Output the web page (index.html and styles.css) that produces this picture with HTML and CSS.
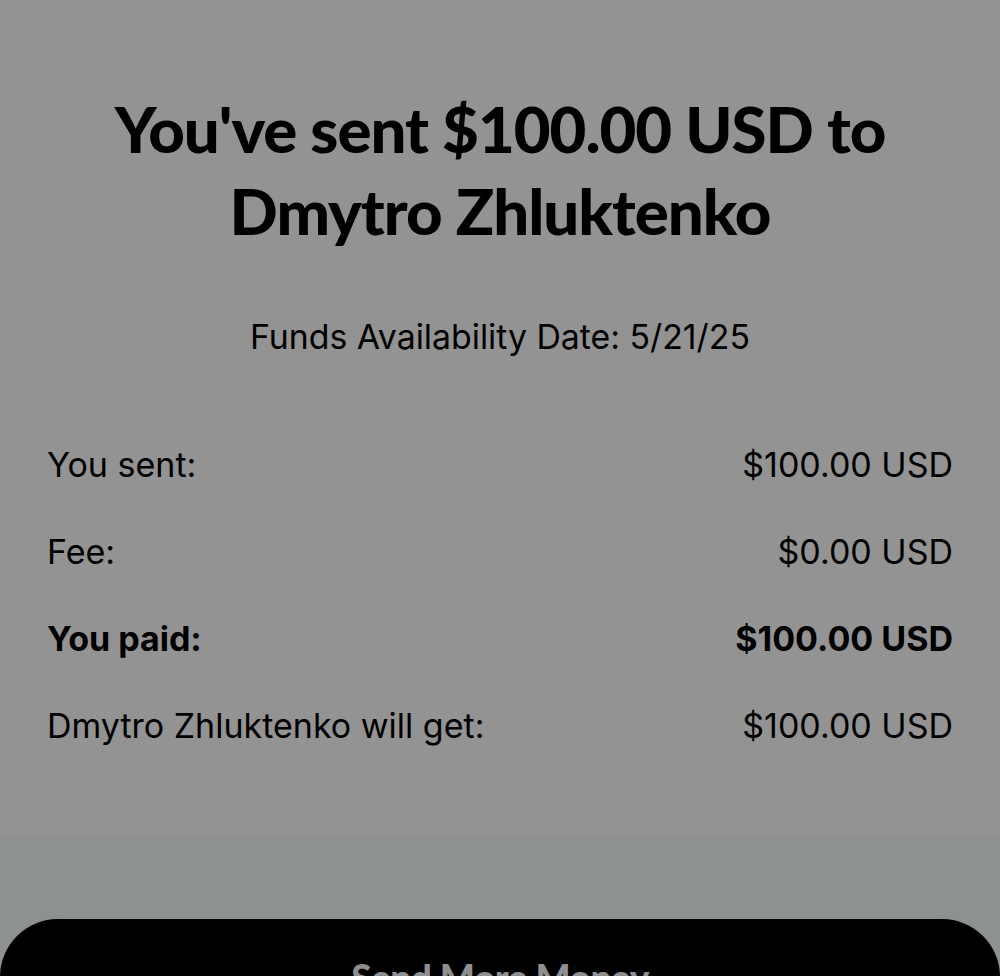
FILE: index.html
```html
<!DOCTYPE html>
<html lang="en">
<head>
    <meta charset="UTF-8">
    <meta name="viewport" content="width=device-width, initial-scale=1.0">
    <title>Payment Sent</title>
    <link rel="stylesheet" href="styles.css">
</head>
<body>
    <div class="summary">
        <h1 class="title">You've sent $100.00 USD to Dmytro Zhluktenko</h1>
        <p class="date">Funds Availability Date: 5/21/25</p>

        <!-- Payment breakdown -->
        <div class="rows">
            <div class="row">
                <span>You sent:</span>
                <span>$100.00 USD</span>
            </div>
            <div class="row">
                <span>Fee:</span>
                <span>$0.00 USD</span>
            </div>
            <div class="row row-total">
                <span>You paid:</span>
                <span>$100.00 USD</span>
            </div>
            <div class="row">
                <span>Dmytro Zhluktenko will get:</span>
                <span>$100.00 USD</span>
            </div>
        </div>
    </div>

    <div class="actions">
        <button class="send-btn">Send More Money</button>
    </div>
</body>
</html>
```

FILE: styles.css
```css
/* General Styles */
body {
    font-family: Inter, "Liberation Sans", sans-serif;
    background-color: #939393;
    color: #000;
    margin: 0;
    padding: 0;
    height: 976px;
    overflow: hidden;
}

.summary {
    padding: 88px 47px 91px;
}

.title {
    font-family: Lato, "Liberation Sans", sans-serif;
    font-weight: 900;
    font-size: 63.5px;
    line-height: 82px;
    letter-spacing: -1px;
    text-align: center;
    margin: 0 60px;
}

.date {
    font-size: 33.8px;
    text-align: center;
    margin: 64px 0 87px;
}

.rows {
    display: flex;
    flex-direction: column;
    gap: 46px;
}

.row {
    display: flex;
    justify-content: space-between;
    font-size: 34px;
    line-height: 41px;
}

.row-total {
    font-weight: 700;
}

.actions {
    background: #8d9191;
    padding-top: 82px;
    height: 200px;
}

.send-btn {
    display: block;
    width: 100%;
    height: 116px;
    background: #000;
    color: #8f8f8f;
    border: none;
    border-radius: 58px;
    font-family: Lato, "Liberation Sans", sans-serif;
    font-weight: 900;
    font-size: 37px;
    letter-spacing: -0.5px;
    padding: 0;
    text-align: center;
}
```
